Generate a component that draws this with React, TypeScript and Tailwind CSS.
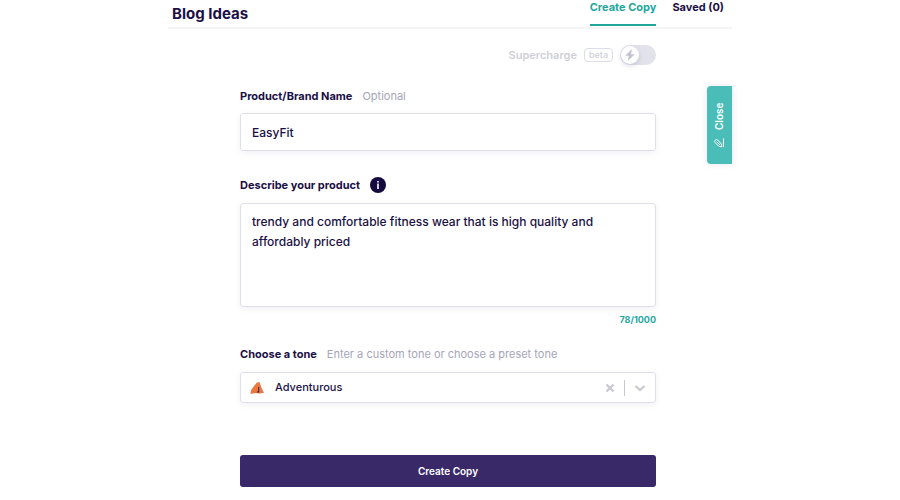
import { useState } from "react";
import clsx from "clsx";

const tones = ["Adventurous", "Friendly", "Professional", "Witty"];

const BoltIcon = () => (
  <svg viewBox="0 0 12 12" className="h-3 w-3" fill="currentColor" aria-hidden="true">
    <path d="M8 0 1.2 6.8h3.6L3.8 12 10.8 5.2H7z" />
  </svg>
);

const PenIcon = () => (
  <svg
    viewBox="0 0 12 12"
    className="h-2.5 w-2.5"
    fill="none"
    stroke="currentColor"
    strokeWidth="1.2"
    strokeLinecap="round"
    strokeLinejoin="round"
    aria-hidden="true"
  >
    <path d="M1.6 9 2 5.8 6.4 1.4a2.2 2.2 0 0 1 3.1 3.1L5 8.6zM4 6.8 7 3.8M1.6 11.4H11" />
  </svg>
);

const TentIcon = () => (
  <svg viewBox="0 0 14 14" className="h-3.5 w-3.5 shrink-0" aria-hidden="true">
    <path d="M0.4 13 1.2 9 4.4 4.6 7 1.4 9.6 1.4 11.2 6.4 13.8 11.8 9.4 12.4 5.4 12z" fill="#ec7840" />
    <path d="M7 1.4 9.6 1.4 11.2 6.4 13.8 11.8 10 12.2z" fill="#e87c48" />
    <path d="M8.2 6h1v5.4H6.8v-.8h1.4z" fill="#302342" />
  </svg>
);

const Header = () => {
  return (
    <header className="flex h-[29px] justify-between border-b-2 border-[#f4f4f6] pl-1 pr-2">
      <h1 className="pt-1 text-[15px] leading-5 font-bold">Blog Ideas</h1>
      <nav className="flex gap-4 text-[11px] leading-3.5 font-bold">
        <button className="h-[26px] border-b-2 border-[#1fa79e] pb-2.5 text-[#1fa79e]">
          Create Copy
        </button>
        <button className="h-[26px] pb-3">Saved (0)</button>
      </nav>
    </header>
  );
};

const Supercharge = () => {
  const [on, setOn] = useState(false);
  return (
    <label className="flex h-5 items-center justify-end gap-[7px] text-[#cfcfda]">
      <span className="text-[11px] font-semibold">Supercharge</span>
      <span className="rounded border border-[#dcdce6] px-1 text-[9px] leading-3 font-medium">
        beta
      </span>
      <input
        type="checkbox"
        className="sr-only"
        checked={on}
        onChange={(e) => setOn(e.target.checked)}
      />
      <span className={clsx("flex h-5 w-9 rounded-full bg-[#e2e2ea] p-px", on && "justify-end")}>
        <span className="flex h-[18px] w-[18px] items-center justify-center rounded-full bg-white text-[#c3c3d0] shadow-[0_2px_5px_rgba(80,80,130,0.2)]">
          <BoltIcon />
        </span>
      </span>
    </label>
  );
};

const App = () => {
  const [name, setName] = useState("EasyFit");
  const [description, setDescription] = useState(
    "trendy and comfortable fitness wear that is high quality and affordably priced"
  );
  const [tone, setTone] = useState("Adventurous");

  return (
    <main className="relative mx-auto max-w-[564px] bg-white font-['Inter',sans-serif] text-[#1b1046]">
      <Header />
      <button className="absolute top-[86px] right-0 flex h-[78px] w-[25px] rotate-180 items-center justify-center gap-2 rounded-r bg-[#4bbdb8] text-[10px] font-semibold text-white shadow-[0_0_6px_rgba(80,80,130,0.15)] [writing-mode:vertical-rl]">
        <span className="rotate-90">
          <PenIcon />
        </span>
        Close
      </button>
      <form className="pt-4 pr-[76px] pl-[72px]" onSubmit={(e) => e.preventDefault()}>
        <Supercharge />

        <div className="mt-[23px] flex h-4 items-center gap-2.5 text-[11px]">
          <label htmlFor="name" className="font-bold">
            Product/Brand Name
          </label>
          <span className="text-[#a5a5b8]">Optional</span>
        </div>
        <input
          id="name"
          value={name}
          onChange={(e) => setName(e.target.value)}
          className="mt-[9px] block h-[38px] w-full rounded-[3px] border border-[#dfdfeb] px-[11px] text-xs font-medium shadow-[0_2px_6px_rgba(80,80,130,0.08)] outline-none"
        />

        <div className="mt-[26px] flex h-4 items-center gap-2.5 text-[11px]">
          <label htmlFor="description" className="font-bold">
            Describe your product
          </label>
          <button
            type="button"
            aria-label="More information"
            className="flex h-4 w-4 items-center justify-center rounded-full bg-[#150b40] text-white"
          >
            <svg viewBox="0 0 16 16" className="h-4 w-4" fill="currentColor" aria-hidden="true">
              <path d="M7.2 4h1.6v1.5H7.2zM7.2 6.5h1.6V12H7.2z" />
            </svg>
          </button>
        </div>
        <textarea
          id="description"
          value={description}
          maxLength={1000}
          onChange={(e) => setDescription(e.target.value)}
          className="mt-[10px] block h-[104px] w-full resize-none rounded-[3px] border border-[#dfdfeb] px-[11px] py-2 text-xs leading-5 font-medium shadow-[0_2px_6px_rgba(80,80,130,0.08)] outline-none"
        />
        <p className="mt-[7px] text-right text-[9px] leading-3 font-bold text-[#1fa79e]">
          {description.length}/1000
        </p>

        <div className="mt-5 flex h-4 items-center gap-2.5 text-[11px]">
          <label htmlFor="tone" className="font-bold">
            Choose a tone
          </label>
          <span className="text-[#a5a5b8]">Enter a custom tone or choose a preset tone</span>
        </div>
        <div className="mt-[10px] flex h-[31px] items-center rounded-[3px] border border-[#dfdfeb] px-[9px] text-[#c8c8d2] shadow-[0_2px_6px_rgba(80,80,130,0.08)]">
          <TentIcon />
          <select
            id="tone"
            value={tone}
            onChange={(e) => setTone(e.target.value)}
            className="ml-[11px] flex-1 appearance-none bg-transparent text-[11px] font-medium text-[#1b1046] outline-none"
          >
            <option value="" />
            {tones.map((item) => (
              <option key={item}>{item}</option>
            ))}
          </select>
          <button type="button" aria-label="Clear tone" onClick={() => setTone("")}>
            <svg viewBox="0 0 10 10" className="h-2.5 w-2.5" stroke="currentColor" strokeWidth="2.2" aria-hidden="true">
              <path d="M1.5 1.5 8.5 8.5M8.5 1.5 1.5 8.5" />
            </svg>
          </button>
          <span className="mx-[9px] h-4 w-px bg-[#c8c8d2]" />
          <svg
            viewBox="0 0 12 12"
            className="h-3 w-3"
            fill="none"
            stroke="currentColor"
            strokeWidth="2.2"
            aria-hidden="true"
          >
            <path d="M1.5 4 6 8 10.5 4" />
          </svg>
        </div>

        <button className="mt-[52px] h-8 w-full rounded-[3px] bg-[#392968] text-[10px] font-semibold text-white">
          Create Copy
        </button>
      </form>
    </main>
  );
};

export default App;
